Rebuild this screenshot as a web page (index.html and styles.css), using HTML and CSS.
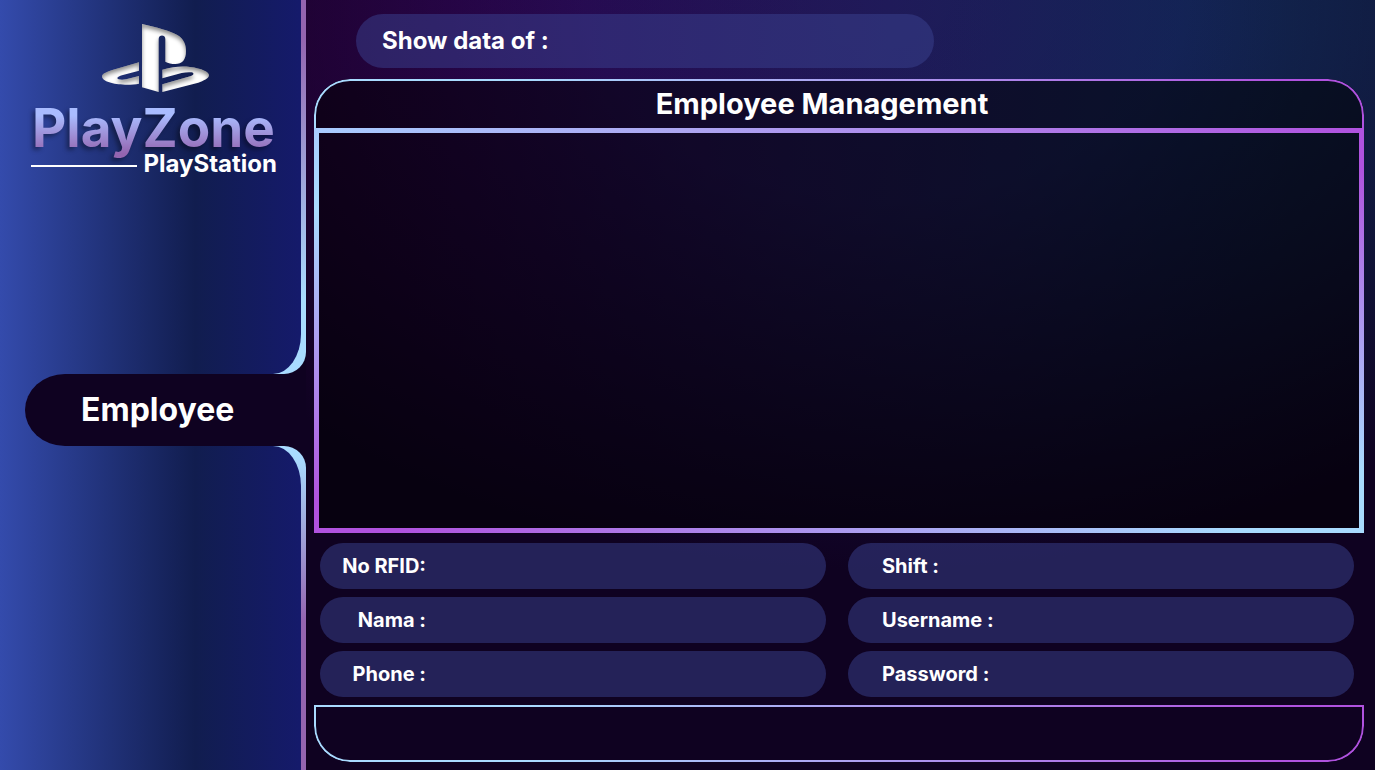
FILE: index.html
```html
<!DOCTYPE html>
<html lang="en">
<head>
<meta charset="utf-8">
<meta name="viewport" content="width=device-width, initial-scale=1">
<title>PlayZone - Employee Management</title>
<link rel="stylesheet" href="styles.css">
</head>
<body>
<div class="app">
  <aside class="sidebar">
    <div class="rail rail-top">
      <div class="rail-fill">
        <div class="brand">
          <svg class="brand-logo" viewBox="36 27 321 204" role="img" aria-label="PlayStation logo">
            <defs>
              <filter id="inset" x="-5%" y="-5%" width="110%" height="110%" color-interpolation-filters="sRGB">
                <feComponentTransfer in="SourceAlpha" result="inverse"><feFuncA type="table" tableValues="1 0"/></feComponentTransfer>
                <feGaussianBlur in="inverse" stdDeviation="6" result="blur"/>
                <feOffset in="blur" dx="1" dy="9" result="moved"/>
                <feFlood flood-color="#000" flood-opacity="0.45"/>
                <feComposite in2="moved" operator="in"/>
                <feComposite in2="SourceAlpha" operator="in" result="shade"/>
                <feMerge><feMergeNode in="SourceGraphic"/><feMergeNode in="shade"/></feMerge>
              </filter>
            </defs>
            <g fill="#fff" filter="url(#inset)">
              <path d="M156 27C200 36 240 48 262 60C282 72 288 90 288 108C288 135 276 147 256 147C245 147 234 144 226 140V72C226 58 206 58 206 72V231L156 217Z"/>
              <path d="M147 142L80 161C50 170 36 176 36 184C36 200 75 210 110 209C125 209 137 208 147 206V183L108 193C95 195 82 194 82 189C82 186 90 183 96 181L147 167Z"/>
              <path d="M217 164C250 155 275 153 300 156C335 160 357 171 357 181C357 190 340 198 325 203L217 231V208L303 183C312 180 313 174 305 172C295 171 285 172 275 174L217 190Z"/>
            </g>
          </svg>
          <h1 class="brand-name">PlayZone</h1>
          <div class="brand-sub"><span class="brand-line"></span><span>PlayStation</span></div>
        </div>
      </div>
    </div>
    <nav class="tab-row"><a class="tab" href="#employee">Employee</a></nav>
    <div class="rail rail-bottom"><div class="rail-fill"></div></div>
  </aside>

  <main class="main">
    <div class="search">
      <label for="show">Show data of :</label>
      <input id="show" type="text">
    </div>

    <section class="panel" id="employee">
      <header class="panel-head"><h2>Employee Management</h2></header>
      <div class="panel-frame"><div class="panel-body"></div></div>
    </section>

    <form class="fields">
      <div class="field field-left"><label for="rfid">No RFID:</label><input id="rfid" type="text"></div>
      <div class="field field-right"><label for="shift">Shift :</label><input id="shift" type="text"></div>
      <div class="field field-left"><label for="nama">Nama :</label><input id="nama" type="text"></div>
      <div class="field field-right"><label for="user">Username :</label><input id="user" type="text"></div>
      <div class="field field-left"><label for="phone">Phone :</label><input id="phone" type="text"></div>
      <div class="field field-right"><label for="pass">Password :</label><input id="pass" type="password"></div>
    </form>

    <footer class="footer-bar"></footer>
  </main>
</div>
</body>
</html>
```

FILE: styles.css
```css
:root {
  --night: #0f0221;
  --sky: #a9dbff;
  --violet: #b052df;
  --mauve: #9465b0;
  --pill: rgba(58, 65, 144, 0.5);
  --edge: linear-gradient(90deg, var(--sky) 20%, var(--violet) 92%);
  --rail: linear-gradient(90deg, #344bac 0, #111d4f 195px, #151a6b 301px);
}

* {
  box-sizing: border-box;
}

body {
  margin: 0;
  background: var(--night);
  color: #fff;
  font-family: Inter, "Liberation Sans", sans-serif;
  font-weight: 700;
}

h1,
h2 {
  margin: 0;
}

.app {
  display: grid;
  grid-template-columns: 306px 1fr;
  min-height: 100vh;
}

/* Sidebar */
.sidebar {
  display: grid;
  grid-template-columns: minmax(0, 1fr);
  grid-template-rows: 374fr 72px 324fr;
}

.rail {
  display: flex;
  padding-right: 5px;
}

.rail-top {
  background: linear-gradient(180deg, var(--mauve) 10%, var(--sky) 80%);
  border-bottom-right-radius: 22px;
}

.rail-bottom {
  background: linear-gradient(180deg, var(--sky) 3%, var(--mauve) 54%);
  border-top-right-radius: 22px;
}

.rail-fill {
  flex: 1;
  min-width: 0;
  background: var(--rail);
}

.rail-top .rail-fill {
  border-bottom-right-radius: 28px 40px;
}

.rail-bottom .rail-fill {
  border-top-right-radius: 28px 40px;
}

.tab-row {
  display: flex;
  padding-left: 25px;
  background: linear-gradient(90deg, transparent 100px, var(--night) 100px), var(--rail);
}

.tab {
  flex: 1;
  display: flex;
  align-items: center;
  padding: 0 0 2px 56px;
  border-radius: 40px 0 0 40px / 36px 0 0 36px;
  background: var(--night);
  color: #fff;
  font-size: 32px;
  text-decoration: none;
}

.brand {
  display: flex;
  flex-direction: column;
  padding: 24px 24px 0 31px;
}

.brand-logo {
  width: 107px;
  height: 68px;
  margin-left: 71px;
}

.brand-name {
  margin-top: 4px;
  padding-left: 1px;
  background: linear-gradient(180deg, #a9bcff 30%, var(--mauve) 90%);
  background-clip: text;
  color: transparent;
  filter: drop-shadow(-3px 3px 2px rgba(0, 0, 0, 0.35));
  font-size: 53px;
  line-height: 64px;
}

.brand-sub {
  display: flex;
  align-items: center;
  gap: 6px;
  margin-top: -12px;
  font-size: 24px;
  line-height: 32px;
}

.brand-line {
  flex: 1;
  height: 2px;
  margin-top: 4px;
  background: #fff;
}

/* Main area */
.main {
  display: flex;
  flex-direction: column;
  padding: 14px 11px 8px 8px;
  background:
    radial-gradient(ellipse 80% 74% at 54% 0, rgba(15, 2, 33, 0) 0%, rgba(15, 2, 33, 0.08) 35%, rgba(15, 2, 33, 0.82) 86%, var(--night) 100%),
    linear-gradient(90deg, #34034e 0, #2f0655 14%, #260e56 30%, #221658 45%, #1c1e5a 64%, #14265a 82%, #122c58 92%, #12305c 100%);
}

.search {
  display: flex;
  align-items: center;
  width: 55%;
  height: 54px;
  margin: 0 0 11px 42px;
  padding: 0 26px 2px;
  border-radius: 27px;
  background: var(--pill);
  font-size: 24px;
}

input {
  flex: 1;
  min-width: 0;
  height: 100%;
  margin-left: 12px;
  padding: 0;
  border: 0;
  outline: 0;
  background: transparent;
  color: #fff;
  font: inherit;
}

.panel {
  flex: 1;
  display: flex;
  flex-direction: column;
}

.panel-head,
.footer-bar {
  position: relative;
}

.panel-head::before,
.footer-bar::before {
  content: "";
  position: absolute;
  inset: 0;
  padding: 2px;
  border-radius: inherit;
  background: var(--edge);
  mask: linear-gradient(#000 0 0) content-box exclude, linear-gradient(#000 0 0);
}

.panel-head {
  height: 49px;
  padding-right: 34px;
  border-radius: 36px 36px 0 0;
  background: rgba(0, 0, 0, 0.5);
  text-align: center;
}

.panel-head::before {
  padding-bottom: 0;
}

.panel-head h2 {
  font-size: 29px;
  line-height: 50px;
}

.panel-frame {
  flex: 1;
  display: flex;
  padding: 5px;
  background:
    linear-gradient(90deg, #a9ccff 0, #ada6f2 35%, var(--violet) 100%) top / 100% 5px no-repeat,
    linear-gradient(90deg, var(--violet) 8%, var(--sky) 88%) bottom / 100% 5px no-repeat,
    linear-gradient(180deg, #a9ccff 0, var(--sky) 20%, var(--violet) 92%) left / 5px 100% no-repeat,
    linear-gradient(180deg, var(--violet) 10%, var(--sky) 85%) right / 5px 100% no-repeat;
}

.panel-body {
  flex: 1;
  background: rgba(0, 0, 0, 0.5);
}

.fields {
  display: grid;
  grid-template-columns: 1fr 1fr;
  gap: 8px 22px;
  padding: 10px 10px 8px 6px;
}

.field {
  display: flex;
  align-items: center;
  height: 46px;
  border-radius: 23px;
  padding-right: 24px;
  background: var(--pill);
  font-size: 20px;
}

.field-left label {
  width: 106px;
  text-align: right;
}

.field-right label {
  padding-left: 34px;
}

.footer-bar {
  height: 57px;
  border-radius: 0 0 36px 36px;
}
```
